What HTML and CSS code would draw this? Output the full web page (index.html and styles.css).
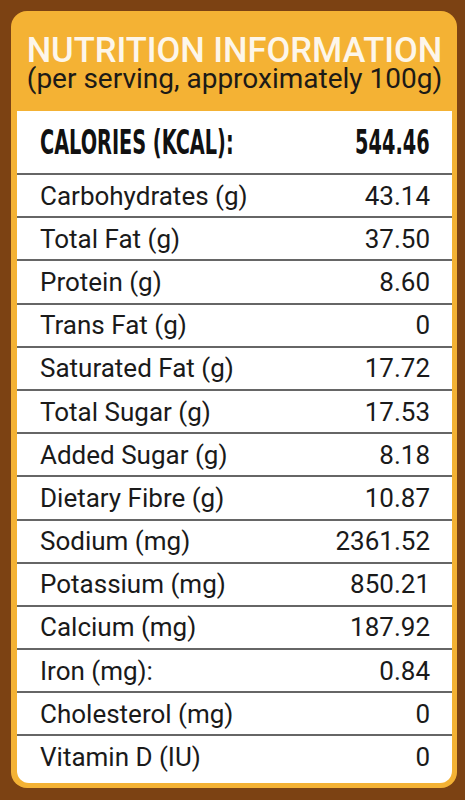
FILE: index.html
```html
<!DOCTYPE html>
<html lang="en">
<head>
    <meta charset="UTF-8" />
    <meta name="viewport" content="width=device-width, initial-scale=1.0" />
    <title>Nutrition Information</title>
    <link rel="stylesheet" href="styles.css">
</head>
<body>
    <div class="label-card">
        <div class="label-header">
            <h1>NUTRITION INFORMATION</h1>
            <p>(per serving, approximately 100g)</p>
        </div>

        <div class="facts">
            <div class="row calories">
                <span class="name"><span class="squeeze">CALORIES (KCAL):</span></span>
                <span class="value"><span class="squeeze">544.46</span></span>
            </div>
            <div class="row"><span class="name">Carbohydrates (g)</span><span class="value">43.14</span></div>
            <div class="row"><span class="name">Total Fat (g)</span><span class="value">37.50</span></div>
            <div class="row"><span class="name">Protein (g)</span><span class="value">8.60</span></div>
            <div class="row"><span class="name">Trans Fat (g)</span><span class="value">0</span></div>
            <div class="row"><span class="name">Saturated Fat (g)</span><span class="value">17.72</span></div>
            <div class="row"><span class="name">Total Sugar (g)</span><span class="value">17.53</span></div>
            <div class="row"><span class="name">Added Sugar (g)</span><span class="value">8.18</span></div>
            <div class="row"><span class="name">Dietary Fibre (g)</span><span class="value">10.87</span></div>
            <div class="row"><span class="name">Sodium (mg)</span><span class="value">2361.52</span></div>
            <div class="row"><span class="name">Potassium (mg)</span><span class="value">850.21</span></div>
            <div class="row"><span class="name">Calcium (mg)</span><span class="value">187.92</span></div>
            <div class="row"><span class="name">Iron (mg):</span><span class="value">0.84</span></div>
            <div class="row"><span class="name">Cholesterol (mg)</span><span class="value">0</span></div>
            <div class="row last"><span class="name">Vitamin D (IU)</span><span class="value">0</span></div>
        </div>
    </div>
</body>
</html>
```

FILE: styles.css
```css
body {
    margin: 0;
    background: #7c4213;
    font-family: Roboto, "Liberation Sans", sans-serif;
}

.label-card {
    margin: 11px 8px 10px 11px;
    background: #f4b234;
    border-radius: 16px;
    padding: 0 5px 5px 6px;
}

.label-header {
    height: 100px;
    text-align: center;
    overflow: hidden;
    white-space: nowrap;
}

.label-header h1 {
    margin: 0;
    padding-top: 22px;
    font-size: 34.5px;
    font-weight: 500;
    line-height: 34px;
    color: #fdf6ea;
}

.label-header p {
    margin: 0;
    font-size: 28px;
    line-height: 24px;
    color: #1c1a17;
}

.facts {
    background: #fff;
    border-radius: 0 0 12px 12px;
    padding-bottom: 5px;
}

.row {
    display: flex;
    justify-content: space-between;
    align-items: center;
    height: 41.2px;
    padding: 0 22px 0 23px;
    border-bottom: 2px solid #666;
    font-size: 26px;
    color: #1a1a1a;
    white-space: nowrap;
}

.row.last {
    border-bottom: none;
}

.calories {
    height: 62px;
    color: #111;
}

.calories .name {
    flex: 1;
    min-width: 0;
}

.calories .squeeze {
    display: inline-block;
    font-family: "DejaVu Sans Condensed", "DejaVu Sans", sans-serif;
    font-weight: bold;
    font-size: 33px;
    transform: scaleX(0.65);
    transform-origin: left center;
}

.calories .value .squeeze {
    transform-origin: right center;
}
```
